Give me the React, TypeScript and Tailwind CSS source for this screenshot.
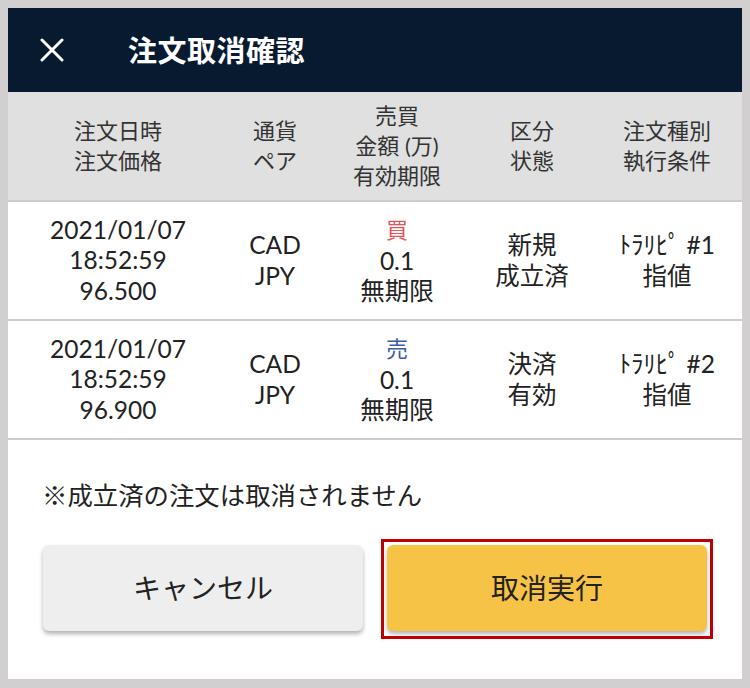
import React from "react";

const font = "font-['Lato','Noto_Sans_CJK_JP',sans-serif]";

type Order = {
  date: string;
  time: string;
  price: string;
  side: "買" | "売";
  amount: string;
  term: string;
  kind: string;
  status: string;
  type: string;
  cond: string;
};

const orders: Order[] = [
  { date: "2021/01/07", time: "18:52:59", price: "96.500", side: "買", amount: "0.1", term: "無期限", kind: "新規", status: "成立済", type: "ﾄﾗﾘﾋﾟ #1", cond: "指値" },
  { date: "2021/01/07", time: "18:52:59", price: "96.900", side: "売", amount: "0.1", term: "無期限", kind: "決済", status: "有効", type: "ﾄﾗﾘﾋﾟ #2", cond: "指値" },
];

const cols = "grid grid-cols-[220px_94px_150px_120px_150px]";

export default function App() {
  return (
    <div className={`w-[750px] h-[688px] bg-[#d1cfcf] pt-2 px-2 pb-[9px] ${font}`}>
      <div className="flex h-full flex-col bg-white text-[#222]">
        {/* header */}
        <div className="flex h-[84px] items-center bg-[#071a2f] text-white">
          <svg width="24" height="24" viewBox="0 0 24 24" className="ml-[32px]">
            <path d="M2 2 L22 22 M22 2 L2 22" stroke="white" strokeWidth="3" strokeLinecap="round" />
          </svg>
          <h1 className="ml-[64px] text-[29px] font-bold leading-none tracking-[0.5px]">注文取消確認</h1>
        </div>

        {/* table head */}
        <div className={`${cols} h-[110px] items-center border-b-2 border-[#cdcdcd] bg-[#e0e0e0] text-center text-[22px] leading-[30px] text-[#333]`}>
          <div>注文日時<br />注文価格</div>
          <div>通貨<br />ペア</div>
          <div>売買<br />金額 (万)<br />有効期限</div>
          <div>区分<br />状態</div>
          <div>注文種別<br />執行条件</div>
        </div>

        {/* rows */}
        {orders.map((o, i) => (
          <div key={i} className={`${cols} h-[119px] items-center border-b-2 border-[#cdcdcd] text-center text-[24.5px] leading-[30.5px]`}>
            <div>{o.date}<br />{o.time}<br />{o.price}</div>
            <div>CAD<br />JPY</div>
            <div>
              <span className={`text-[22px] ${o.side === "買" ? "text-[#e2555b]" : "text-[#3c5ea8]"}`}>{o.side}</span>
              <br />{o.amount}<br />{o.term}
            </div>
            <div>{o.kind}<br />{o.status}</div>
            <div>{o.type}<br />{o.cond}</div>
          </div>
        ))}

        <p className="mt-[40px] px-[34px] text-[25.4px] leading-[30px]">※成立済の注文は取消されません</p>

        <div className="mt-[35px] flex items-start gap-6 px-[35px]">
          <button className="h-[86px] flex-1 rounded-md bg-[#eeeeee] text-[28px] text-[#222] shadow-[0_3px_4px_rgba(0,0,0,0.3)]">
            キャンセル
          </button>
          <div className="flex-1 pb-[2px] outline-[3px] outline-solid outline-[#c00000] outline-offset-[3px]">
            <button className="h-[86px] w-full rounded-md bg-[#f6c346] text-[28px] text-[#222] shadow-[0_3px_4px_rgba(0,0,0,0.3)]">
              取消実行
            </button>
          </div>
        </div>
      </div>
    </div>
  );
}
